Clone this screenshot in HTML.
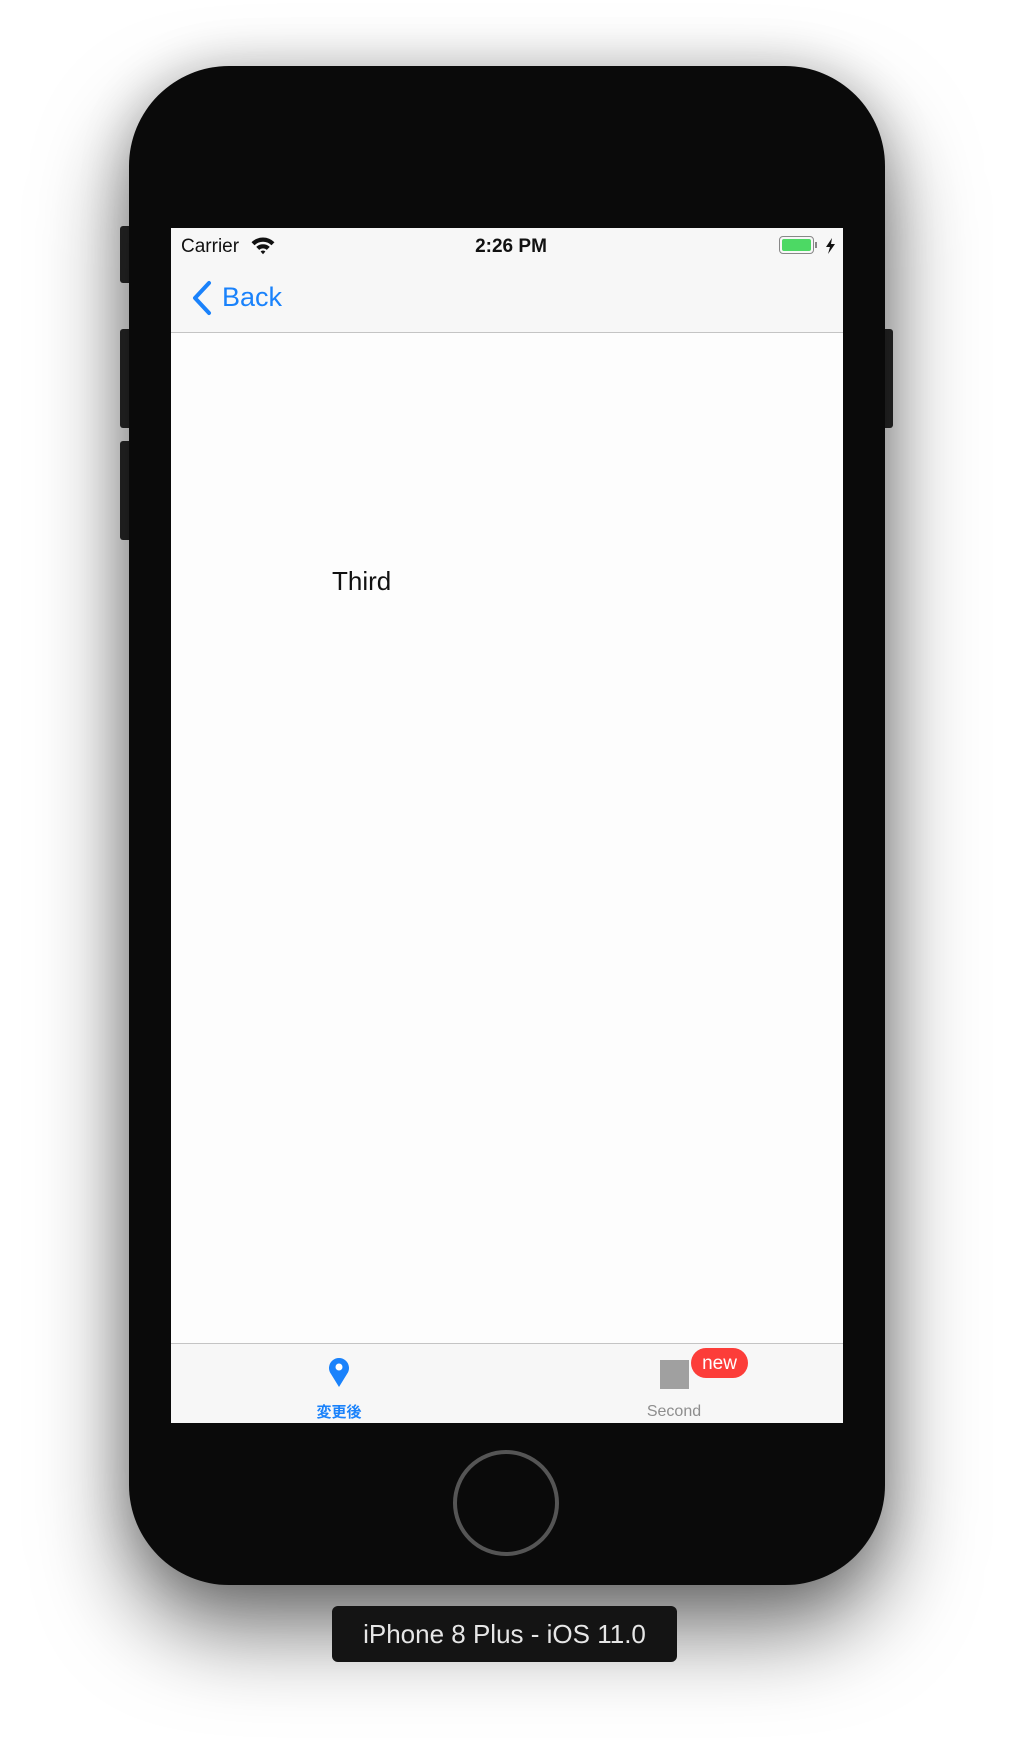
<!DOCTYPE html>
<html><head><meta charset="utf-8"><style>
html,body{margin:0;padding:0;}
body{width:1014px;height:1748px;background:#fff;position:relative;overflow:hidden;font-family:"Liberation Sans","Noto Sans CJK JP",sans-serif;}
.abs{position:absolute;}
.phone{left:129px;top:66px;width:756px;height:1519px;background:#0a0a0a;border-radius:100px;box-shadow:0 45px 90px rgba(0,0,0,0.55),0 0 50px rgba(0,0,0,0.2);}
.btn{background:#2b2b2b;border-radius:3px;}
.screen{left:171px;top:228px;width:672px;height:1195px;background:#fdfdfd;overflow:hidden;}
</style></head><body>
<div class="abs btn" style="left:120px;top:226px;width:12px;height:57px"></div>
<div class="abs btn" style="left:120px;top:329px;width:12px;height:99px"></div>
<div class="abs btn" style="left:120px;top:441px;width:12px;height:99px"></div>
<div class="abs btn" style="left:882px;top:329px;width:11px;height:99px"></div>
<div class="abs phone"></div>
<div class="abs screen">
  <div class="abs" style="left:0;top:0;width:672px;height:104px;background:#f7f7f7;border-bottom:1px solid #c4c4c4"></div>
  <div class="abs" style="left:10px;top:8px;font-size:19px;color:#111">Carrier</div>
  <svg class="abs" style="left:80px;top:8px" width="24" height="19" viewBox="0 0 22 17"><path d="M0.5 5.5 A15 15 0 0 1 21.5 5.5 L18.8 8.3 A11 11 0 0 0 3.2 8.3Z M4.8 9.8 A9 9 0 0 1 17.2 9.8 L14.5 12.5 A5.2 5.2 0 0 0 7.5 12.5Z M8.8 14 A3.2 3.2 0 0 1 13.2 14 L11 16.5Z" fill="#111"/></svg>
  <div class="abs" style="left:4px;width:672px;top:8px;text-align:center;font-size:19px;font-weight:bold;color:#111">2:26 PM</div>
  <div class="abs" style="left:608px;top:8px;width:35px;height:18px;border:1.5px solid #888;border-radius:4px;box-sizing:border-box"></div>
  <div class="abs" style="left:611px;top:11px;width:29px;height:12px;background:#4cd964;border-radius:2px"></div>
  <div class="abs" style="left:644px;top:14px;width:2px;height:6px;background:#888"></div>
  <svg class="abs" style="left:654px;top:10px" width="11" height="16" viewBox="0 0 11 16"><path d="M7 0 L1 9 L5 9 L3 16 L10 6 L6 6 Z" fill="#111"/></svg>
  <svg class="abs" style="left:20px;top:52px" width="22" height="36" viewBox="0 0 22 36"><path d="M18 3 L4 18 L18 33" fill="none" stroke="#1a82fb" stroke-width="4" stroke-linecap="round" stroke-linejoin="round"/></svg>
  <div class="abs" style="left:51px;top:54px;font-size:27px;color:#1a82fb">Back</div>
  <div class="abs" style="left:161px;top:338px;font-size:26px;color:#111">Third</div>
  <div class="abs" style="left:0;top:1115px;width:672px;height:80px;background:#f7f7f7;border-top:1px solid #c4c4c4"></div>
  <svg class="abs" style="left:157px;top:1128px" width="22" height="32" viewBox="0 0 22 32"><path d="M11 31 L3 18 A10 10 0 1 1 19 18 Z" fill="#1a82fb"/><circle cx="11" cy="11" r="3.5" fill="#fff"/></svg>
  <div class="abs" style="left:118px;top:1173px;width:100px;text-align:center;font-size:15px;font-weight:bold;color:#1a82fb">変更後</div>
  <div class="abs" style="left:489px;top:1132px;width:29px;height:29px;background:#a0a0a0"></div>
  <div class="abs" style="left:520px;top:1120px;width:57px;height:30px;background:#fc3d39;border-radius:15px;color:#fff;font-size:19px;text-align:center;line-height:32px">new</div>
  <div class="abs" style="left:453px;top:1175px;width:100px;text-align:center;font-size:16px;color:#8e8e8e">Second</div>
</div>
<div class="abs" style="left:453px;top:1450px;width:106px;height:106px;border:4px solid #555;border-radius:50%;box-sizing:border-box"></div>
<div class="abs" style="left:332px;top:1606px;width:345px;height:56px;background:#141414;border-radius:6px;color:#e6e6e6;font-size:26px;text-align:center;line-height:56px">iPhone 8 Plus - iOS 11.0</div>
</body></html>
